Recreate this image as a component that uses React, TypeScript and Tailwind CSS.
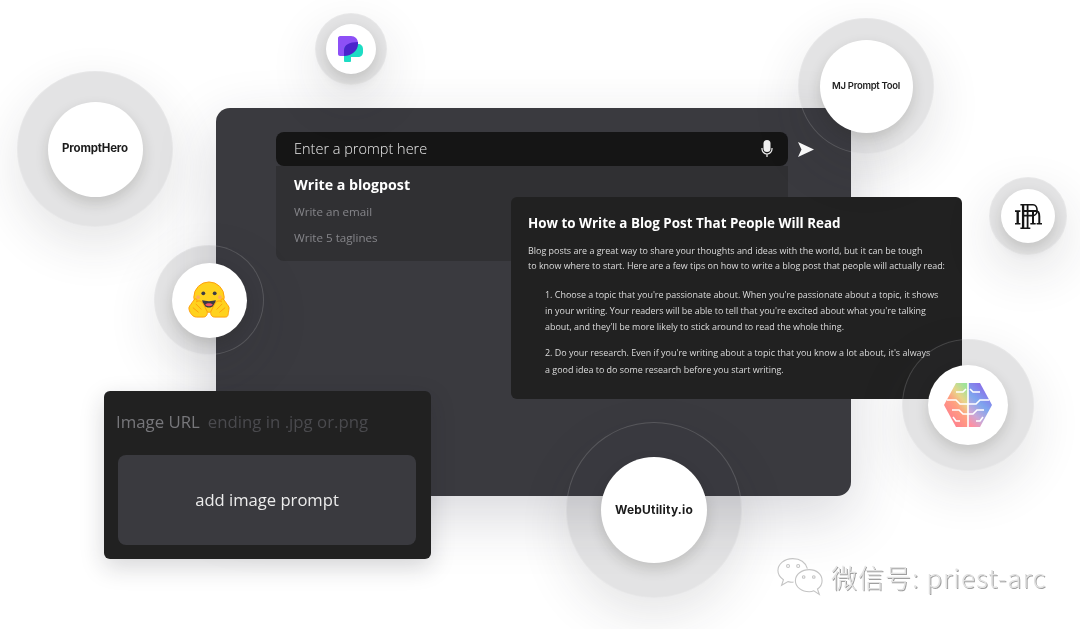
import type { ReactNode } from "react";

function Badge({ ring, disc, children }: { ring: string; disc: string; children: ReactNode }) {
	return (
		<div
			className={`absolute flex items-center justify-center rounded-full border border-white/15 bg-[#3a3a3f]/14 shadow-[0_18px_50px_rgba(40,40,50,0.12)] ${ring}`}
		>
			<div
				className={`flex items-center justify-center rounded-full bg-white shadow-[0_6px_14px_rgba(30,30,20,0.16)] ${disc}`}
			>
				{children}
			</div>
		</div>
	);
}

function PerplexLogo() {
	return (
		<svg width="26" height="27" viewBox="0 0 26 27">
			<path d="M2 0h11c4 0 7 3 7 7v4H12v9H2c-1 0-2-1-2-2V2c0-1 1-2 2-2z" fill="#8d50f6" />
			<path d="M14 8h6c3 0 5 2 5 5v3c0 3-2 5-5 5h-7v4c0 1-1 1-2 1H8c-1 0-2 0-2-1V14c0-3 3-6 8-6z" fill="#1ddcc4" />
			<path d="M6 20v-6c0-5 5-8 14-8v2c0 6-6 12-14 12z" fill="#4b23cc" />
		</svg>
	);
}

function HugLogo() {
	return (
		<svg width="42" height="38" viewBox="0 0 44 40">
			<circle cx="22" cy="17" r="16" fill="#ffd21e" stroke="#ff9d0b" strokeWidth="1" />
			<circle cx="16" cy="13" r="2" fill="#3a3b45" />
			<circle cx="28" cy="13" r="2" fill="#3a3b45" />
			<circle cx="10.5" cy="17" r="2" fill="#ffad5c" />
			<circle cx="33.5" cy="17" r="2" fill="#ffad5c" />
			<path d="M15 20c3 1.600 11 1.600 14 0c0 5-3 8-7 8s-7-3-7-8z" fill="#3a3b45" />
			<path d="M18 25c2-2 6-2 8 0c-1 2-7 2-8 0z" fill="#f3536b" />
			<path d="M1 30c-1-3 2-5 3-7l3-4c2-1 3 1 2 3c2-2 5-1 7 2l4 8c1 3-1 6-4 6H9c-4 0-7-4-8-8z" fill="#ffd21e" stroke="#ff9d0b" strokeWidth="1" />
			<path d="M43 30c1-3-2-5-3-7l-3-4c-2-1-3 1-2 3c-2-2-5-1-7 2l-4 8c-1 3 1 6 4 6h11c4 0 3-4 4-8z" fill="#ffd21e" stroke="#ff9d0b" strokeWidth="1" />
			<path d="M8 24l6 6M5 28l6 5M36 24l-6 6M39 28l-6 5" stroke="#ff9d0b" strokeWidth="1" fill="none" />
		</svg>
	);
}

function BrainLogo() {
	return (
		<svg width="48" height="44" viewBox="0 0 48 44">
			<defs>
				<linearGradient id="brainLeft" x1="0.8" y1="0" x2="0.2" y2="0.9">
					<stop offset="0" stopColor="#9fe39a" />
					<stop offset="0.3" stopColor="#e8d58a" />
					<stop offset="0.55" stopColor="#ff9f80" />
					<stop offset="1" stopColor="#ff7b90" />
				</linearGradient>
				<linearGradient id="brainRight" x1="0.7" y1="0" x2="0.2" y2="1">
					<stop offset="0" stopColor="#8a63e8" />
					<stop offset="0.45" stopColor="#7ea6ee" />
					<stop offset="0.75" stopColor="#c9a8d8" />
					<stop offset="1" stopColor="#ff8fa0" />
				</linearGradient>
			</defs>
			<path d="M12 0h12v44H12L0 22z" fill="url(#brainLeft)" />
			<path d="M24 0h12l12 22l-12 22H24z" fill="url(#brainRight)" />
			<path d="M24 0v44M12 9h7l3-3M36 9h-7l-3-3M3 17h9l4 4h8M45 17h-9l-4 4h-8M8 27h7l4 4h5M40 27h-7l-4 4h-5M16 38h-4l-3-4M32 38h4l3-4" stroke="#fff" strokeWidth="1.600" fill="none" />
		</svg>
	);
}

function MonogramLogo() {
	return (
		<svg width="27" height="27" viewBox="0 0 30 28" fill="none" stroke="#141414">
			<path d="M3 8v14M9 1v26" strokeWidth="2.600" />
			<path d="M14 1v26" strokeWidth="2" />
			<path d="M0 8h6M0 22h6M6 27h11M6 1h14c6 0 6 12 0 12H9" strokeWidth="1.800" />
			<path d="M9 8h14c4 0 4 3 4 6v8M20 8v14" strokeWidth="2.200" />
			<path d="M17 22h6M24 22h6" strokeWidth="1.600" />
		</svg>
	);
}

function WechatMark() {
	return (
		<svg width="46" height="40" viewBox="0 0 50 42" fill="none" stroke="#c4c4c4" strokeWidth="1.200">
			<path d="M33 12C31 5 25 1 17 1C8 1 1 7 1 14c0 5 3 8 6 10l-2 6l7-4c2 .5 4 1 6 .5" fill="#fff" />
			<path d="M49 25c0-7-6-12-14-12s-15 5-15 12s7 12 15 12c2 0 3 0 5-1l6 4l-2-6c3-2 5-5 5-9z" fill="#fff" />
			<circle cx="12" cy="9" r="1.600" />
			<circle cx="23" cy="9" r="1.600" />
			<circle cx="29" cy="21" r="1.400" />
			<circle cx="40" cy="21" r="1.400" />
		</svg>
	);
}

export default function App() {
	return (
		<div className="relative h-[629px] w-[1080px] overflow-hidden bg-white font-['Open_Sans',sans-serif] blur-[0.5px]">
			<section className="absolute left-[216px] top-[108px] h-[388px] w-[635px] rounded-[14px] bg-[#3a3a3f] pl-[60px] pt-6 shadow-[0_20px_60px_rgba(40,40,60,0.18)]">
				<div className="flex items-center">
					<div className="flex h-[34px] w-[512px] items-center justify-between rounded-lg bg-[#151515] pl-[18px] pr-[15px]">
						<span className="text-[14.5px] font-light text-[#e8e8e8]">Enter a prompt here</span>
						<svg width="12" height="18" viewBox="0 0 12 18" className="text-[#f0f0f0]">
							<rect x="2.500" y="0" width="7" height="12" rx="3.500" fill="currentColor" />
							<path d="M1 8v1a5 5 0 0 0 10 0V8M6 14v3" stroke="currentColor" strokeWidth="1.200" fill="none" />
						</svg>
					</div>
					<svg width="16" height="15" viewBox="0 0 16 15" className="ml-[10px]">
						<path d="M0 0L16 7.500L0 15L3.500 7.500z" fill="#ffffff" />
					</svg>
				</div>
				<div className="flex h-[95px] w-[512px] flex-col rounded-b-lg bg-[#303033] pl-[18px] pt-2">
					<span className="text-[14.200px] font-bold leading-[22px] text-white">Write a blogpost</span>
					<span className="mt-[5px] text-[11.600px] leading-[22px] text-[#85858a]">Write an email</span>
					<span className="mt-[4px] text-[11.600px] leading-[22px] text-[#85858a]">Write 5 taglines</span>
				</div>
			</section>

			<article className="absolute left-[511px] top-[197px] h-[202px] w-[451px] whitespace-nowrap rounded-md bg-[#212121] pl-[17px] pt-4 text-[8.950px] text-[#dcdcdc]">
				<h2 className="text-[13.400px] font-bold leading-[20px] text-white">How to Write a Blog Post That People Will Read</h2>
				<p className="mt-[10px] leading-[15px]">
					Blog posts are a great way to share your thoughts and ideas with the world, but it can be tough
					<br />
					to know where to start. Here are a few tips on how to write a blog post that people will actually read:
				</p>
				<p className="mt-[14px] pl-[17px] leading-4">
					1. Choose a topic that you're passionate about. When you're passionate about a topic, it shows
					<br />
					in your writing. Your readers will be able to tell that you're excited about what you're talking
					<br />
					about, and they'll be more likely to stick around to read the whole thing.
				</p>
				<p className="mt-[9px] pl-[17px] leading-[17px]">
					2. Do your research. Even if you're writing about a topic that you know a lot about, it's always
					<br />
					a good idea to do some research before you start writing.
				</p>
			</article>

			<Badge ring="left-[17px] top-[71px] size-[156px]" disc="size-[95px]">
				<span className="font-['Inter',sans-serif] text-[11.5px] font-bold tracking-[-0.2px] text-[#1b1b1b]">PromptHero</span>
			</Badge>
			<Badge ring="left-[315px] top-[13px] size-[72px]" disc="size-[50px]">
				<PerplexLogo />
			</Badge>
			<Badge ring="left-[154px] top-[245px] size-[110px]" disc="size-[75px]">
				<HugLogo />
			</Badge>
			<Badge ring="left-[798px] top-[18px] size-[136px]" disc="size-[93px]">
				<span className="font-['Inter',sans-serif] text-[9.5px] font-semibold tracking-[-0.3px] text-[#222]">MJ Prompt Tool</span>
			</Badge>
			<Badge ring="left-[989px] top-[177px] size-[78px]" disc="size-[54px]">
				<MonogramLogo />
			</Badge>
			<Badge ring="left-[902px] top-[339px] size-[132px]" disc="size-[80px]">
				<BrainLogo />
			</Badge>
			<Badge ring="left-[566px] top-[422px] size-[176px]" disc="size-[106px]">
				<span className="font-['Inter',sans-serif] text-[12px] font-bold tracking-[0.2px] text-[#1b1b1b]">WebUtility.io</span>
			</Badge>

			<div className="absolute left-[104px] top-[391px] flex h-[168px] w-[327px] flex-col rounded-md bg-[#212121] px-[14px] shadow-[0_8px_24px_rgba(30,30,40,0.18)]">
				<div className="flex h-[64px] items-center gap-2 pb-[3px] text-[16.800px]">
					<span className="-ml-0.5 text-[#77777b]">Image URL</span>
					<span className="text-[#4a4a4e]">ending in .jpg or.png</span>
				</div>
				<div className="flex h-[90px] w-[298px] items-center justify-center rounded-lg bg-[#3a3a3f] text-[16.600px] text-[#ececec]">
					add image prompt
				</div>
			</div>

			<div className="absolute left-[777px] top-[557px] flex items-center gap-[8px]">
				<WechatMark />
				<span className="font-['Noto_Sans_CJK_SC','Liberation_Sans',sans-serif] text-[26px] font-light leading-[40px] tracking-[1px] text-[#e2e2e2] [text-shadow:1px_1px_0_#a0a0a0]">
					微信号: priest-arc
				</span>
			</div>
		</div>
	);
}
